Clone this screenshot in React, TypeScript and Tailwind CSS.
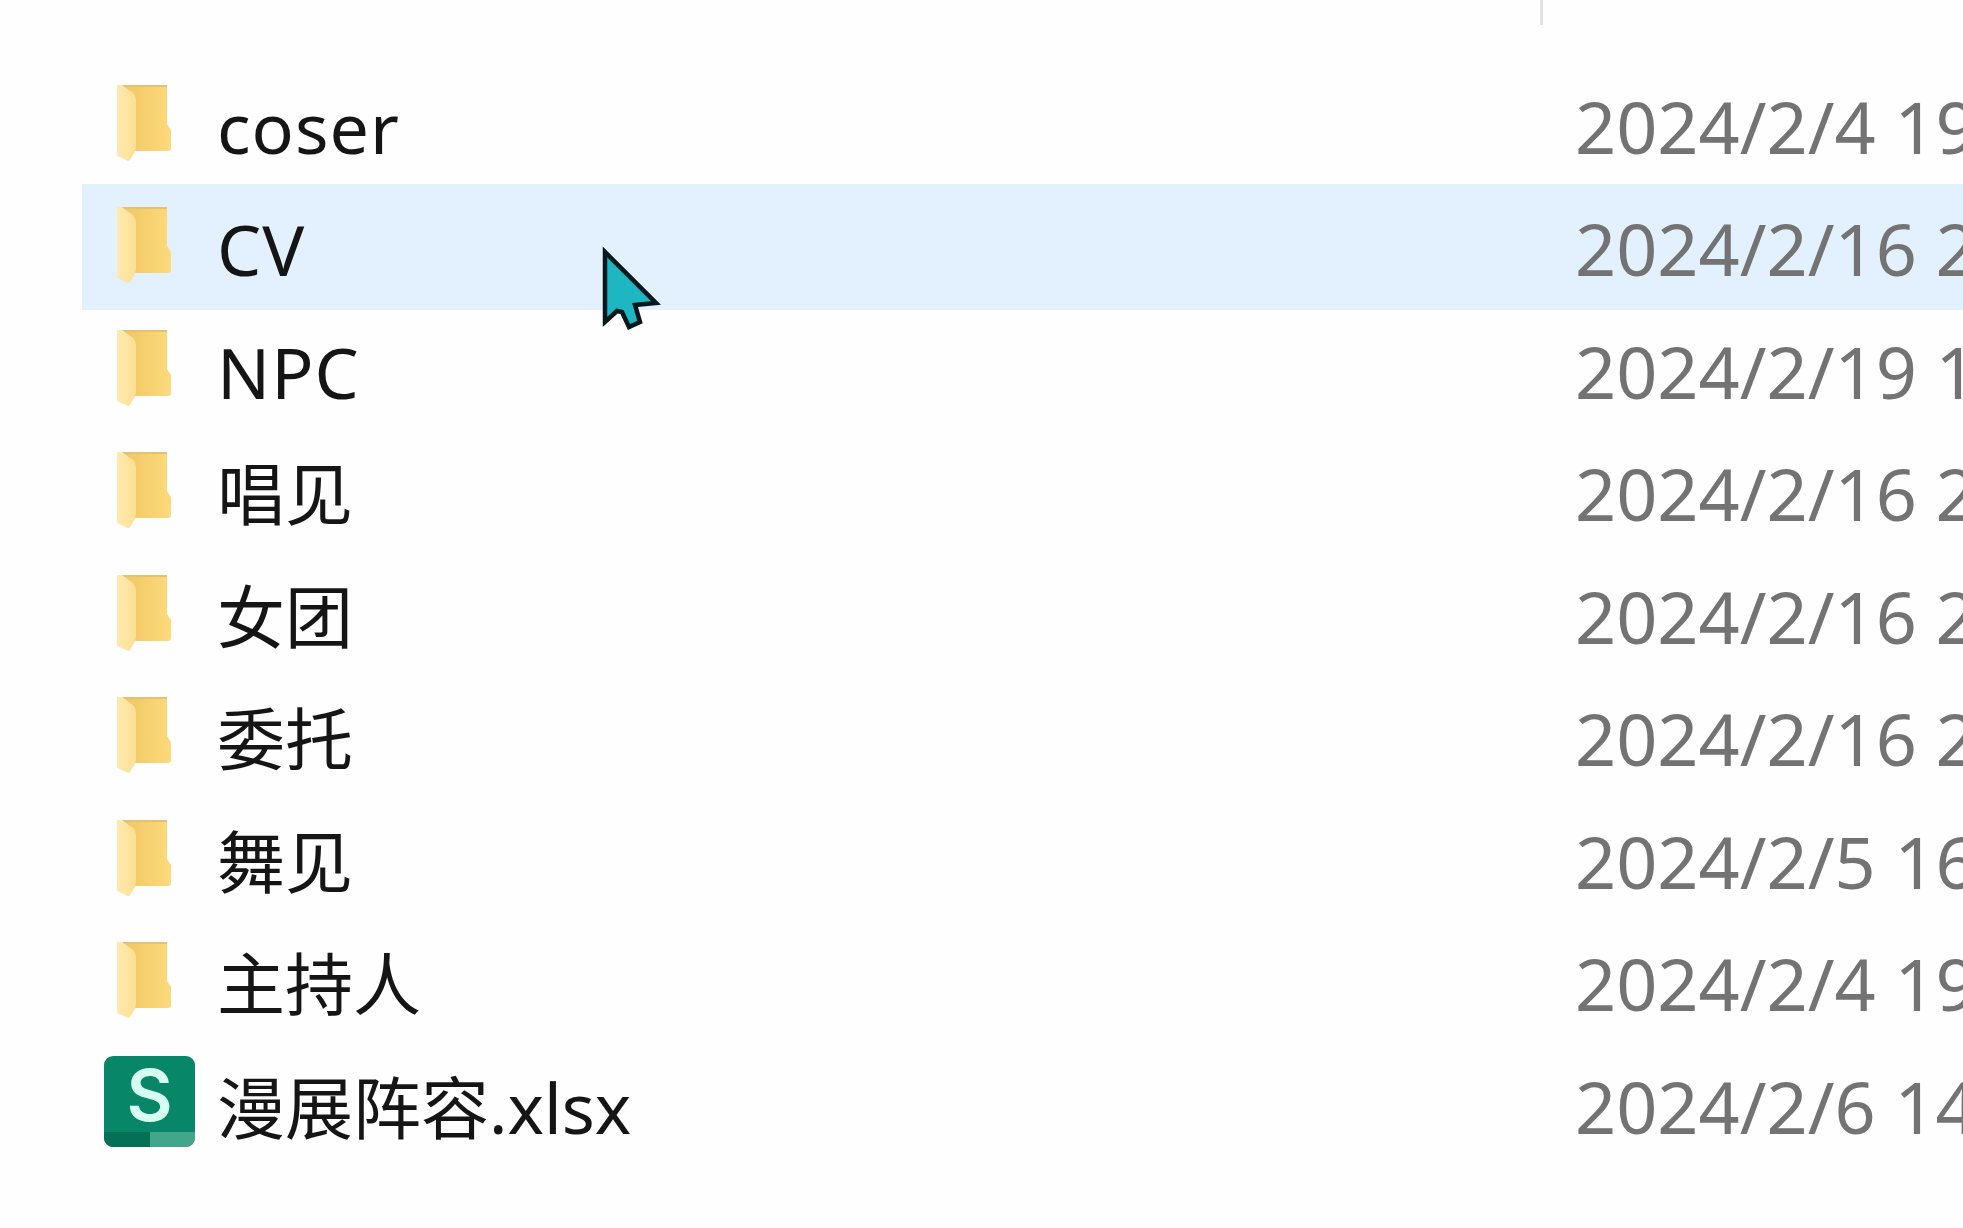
import { clsx } from "clsx";

type Entry = {
  name: string;
  ext?: string;
  cjk?: boolean;
  kind: "folder" | "sheet";
  modified: string;
};

const entries: Entry[] = [
  { name: "coser", kind: "folder", modified: "2024/2/4 19" },
  { name: "CV", kind: "folder", modified: "2024/2/16 2" },
  { name: "NPC", kind: "folder", modified: "2024/2/19 1" },
  { name: "唱见", cjk: true, kind: "folder", modified: "2024/2/16 2" },
  { name: "女团", cjk: true, kind: "folder", modified: "2024/2/16 2" },
  { name: "委托", cjk: true, kind: "folder", modified: "2024/2/16 2" },
  { name: "舞见", cjk: true, kind: "folder", modified: "2024/2/5 16" },
  { name: "主持人", cjk: true, kind: "folder", modified: "2024/2/4 19" },
  { name: "漫展阵容", ext: ".xlsx", cjk: true, kind: "sheet", modified: "2024/2/6 14" },
];

function FolderIcon() {
  return (
    <svg className="ml-[35px] mt-[20px] h-[80px] w-[58px] shrink-0" viewBox="0 0 58 80">
      <defs>
        <linearGradient id="folder-back" x1="0" y1="0" x2="1" y2="0">
          <stop offset="0" stopColor="#efc662" />
          <stop offset="1" stopColor="#fdda7c" />
        </linearGradient>
        <linearGradient id="folder-front" x1="0" y1="0" x2="1" y2="0">
          <stop offset="0" stopColor="#fdeab0" />
          <stop offset="1" stopColor="#fddf94" />
        </linearGradient>
      </defs>
      <path d="M5 3H50V42L54 48V66Q54 69 51 69H16V12Z" fill="url(#folder-back)" />
      <path d="M5 3H50V5H7Z" fill="#e3c273" />
      <path d="M0 3H4L16 11Q19 14 19 18V64Q19 69 16 73L13 78Q12 80 9 78L0 74Z" fill="url(#folder-front)" />
    </svg>
  );
}

function SheetIcon() {
  return (
    <div className="ml-[22px] mt-[14px] flex h-[91px] w-[91px] shrink-0 flex-col overflow-hidden rounded-[9px] bg-[#078767]">
      <div className="flex h-[76px] items-center justify-center pt-[3px] font-['Inter',sans-serif] text-[71px] leading-none font-semibold text-[#d5fff0]">
        S
      </div>
      <div className="flex h-[15px]">
        <div className="w-1/2 bg-[#047056]" />
        <div className="w-1/2 bg-[#43a68a]" />
      </div>
    </div>
  );
}

function Row({ entry, hovered }: { entry: Entry; hovered: boolean }) {
  return (
    <div className={clsx("-mb-[3.5px] flex h-[126px] items-start whitespace-nowrap", hovered && "bg-[#e3f0fd]")}>
      <div className="flex w-[135px] shrink-0">
        {entry.kind === "folder" ? <FolderIcon /> : <SheetIcon />}
      </div>
      <div className="flex h-[126px] w-[1358px] shrink-0 items-baseline pt-[15px] text-[70px] leading-[100px] text-[#151515]">
        <span className={clsx(entry.cjk ? "text-[68px]" : "tracking-[1px]")}>{entry.name}</span>
        {entry.ext && <span className="text-[69px]">{entry.ext}</span>}
      </div>
      <div className="pt-[14px] text-[72px] leading-[100px] text-[#737373]">{entry.modified}</div>
    </div>
  );
}

function Cursor() {
  return (
    <svg className="absolute top-[245px] left-[601px] h-[88px] w-[62px]" viewBox="0 0 62 88">
      <path
        d="M4 7V77L16 66L21 67L28 82L39 77L34 60L55 58Z"
        fill="#1cb7c0"
        stroke="#07181c"
        strokeWidth="4.5"
        strokeLinejoin="miter"
      />
    </svg>
  );
}

export default function App() {
  return (
    <div className="relative h-[1228px] w-[1963px] overflow-hidden bg-[#fefefe] font-['Noto_Sans','Noto_Sans_CJK_SC',sans-serif]">
      {/* Column header divider */}
      <div className="flex h-[61.5px] pl-[1540px]">
        <div className="h-[25px] w-[3px] bg-[#e2e2e2]" />
      </div>

      <div className="pl-[82px]">
        {entries.map((entry, i) => (
          <Row key={entry.name} entry={entry} hovered={i === 1} />
        ))}
      </div>

      <Cursor />
    </div>
  );
}
